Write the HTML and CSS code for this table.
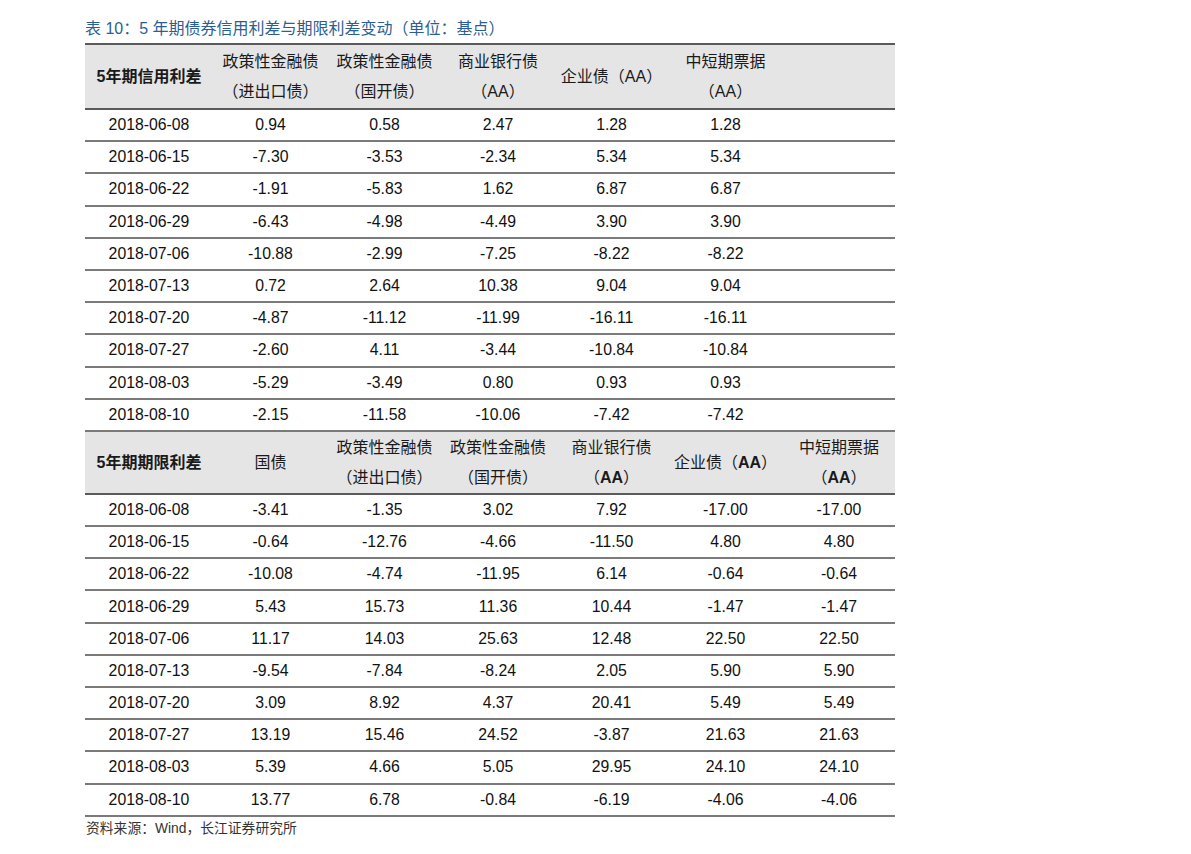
FILE: index.html
```html
<!DOCTYPE html>
<html lang="zh-CN">
<head>
<meta charset="utf-8">
<title>5年期债券信用利差与期限利差变动</title>
<link rel="stylesheet" href="styles.css">
</head>
<body>
<div class="page">
  <div class="title">表 10：5 年期债券信用利差与期限利差变动（单位：基点）</div>
  <table class="spread">
    <colgroup>
      <col class="c-date">
      <col class="c2"><col class="c3"><col class="c4"><col class="c5"><col class="c6"><col class="c7">
    </colgroup>
    <tbody>
      <tr class="head">
        <td class="lead">5年期信用利差</td>
        <td>政策性金融债<br>（进出口债）</td>
        <td>政策性金融债<br>（国开债）</td>
        <td>商业银行债<br>（AA）</td>
        <td>企业债（AA）</td>
        <td>中短期票据<br>（AA）</td>
        <td></td>
      </tr>
      <tr><td>2018-06-08</td><td>0.94</td><td>0.58</td><td>2.47</td><td>1.28</td><td>1.28</td><td></td></tr>
      <tr><td>2018-06-15</td><td>-7.30</td><td>-3.53</td><td>-2.34</td><td>5.34</td><td>5.34</td><td></td></tr>
      <tr><td>2018-06-22</td><td>-1.91</td><td>-5.83</td><td>1.62</td><td>6.87</td><td>6.87</td><td></td></tr>
      <tr><td>2018-06-29</td><td>-6.43</td><td>-4.98</td><td>-4.49</td><td>3.90</td><td>3.90</td><td></td></tr>
      <tr><td>2018-07-06</td><td>-10.88</td><td>-2.99</td><td>-7.25</td><td>-8.22</td><td>-8.22</td><td></td></tr>
      <tr><td>2018-07-13</td><td>0.72</td><td>2.64</td><td>10.38</td><td>9.04</td><td>9.04</td><td></td></tr>
      <tr><td>2018-07-20</td><td>-4.87</td><td>-11.12</td><td>-11.99</td><td>-16.11</td><td>-16.11</td><td></td></tr>
      <tr><td>2018-07-27</td><td>-2.60</td><td>4.11</td><td>-3.44</td><td>-10.84</td><td>-10.84</td><td></td></tr>
      <tr><td>2018-08-03</td><td>-5.29</td><td>-3.49</td><td>0.80</td><td>0.93</td><td>0.93</td><td></td></tr>
      <tr><td>2018-08-10</td><td>-2.15</td><td>-11.58</td><td>-10.06</td><td>-7.42</td><td>-7.42</td><td></td></tr>
      <tr class="head head-second">
        <td class="lead">5年期期限利差</td>
        <td>国债</td>
        <td>政策性金融债<br>（进出口债）</td>
        <td>政策性金融债<br>（国开债）</td>
        <td>商业银行债<br>（<b>AA</b>）</td>
        <td>企业债（<b>AA</b>）</td>
        <td>中短期票据<br>（<b>AA</b>）</td>
      </tr>
      <tr><td>2018-06-08</td><td>-3.41</td><td>-1.35</td><td>3.02</td><td>7.92</td><td>-17.00</td><td>-17.00</td></tr>
      <tr><td>2018-06-15</td><td>-0.64</td><td>-12.76</td><td>-4.66</td><td>-11.50</td><td>4.80</td><td>4.80</td></tr>
      <tr><td>2018-06-22</td><td>-10.08</td><td>-4.74</td><td>-11.95</td><td>6.14</td><td>-0.64</td><td>-0.64</td></tr>
      <tr><td>2018-06-29</td><td>5.43</td><td>15.73</td><td>11.36</td><td>10.44</td><td>-1.47</td><td>-1.47</td></tr>
      <tr><td>2018-07-06</td><td>11.17</td><td>14.03</td><td>25.63</td><td>12.48</td><td>22.50</td><td>22.50</td></tr>
      <tr><td>2018-07-13</td><td>-9.54</td><td>-7.84</td><td>-8.24</td><td>2.05</td><td>5.90</td><td>5.90</td></tr>
      <tr><td>2018-07-20</td><td>3.09</td><td>8.92</td><td>4.37</td><td>20.41</td><td>5.49</td><td>5.49</td></tr>
      <tr><td>2018-07-27</td><td>13.19</td><td>15.46</td><td>24.52</td><td>-3.87</td><td>21.63</td><td>21.63</td></tr>
      <tr><td>2018-08-03</td><td>5.39</td><td>4.66</td><td>5.05</td><td>29.95</td><td>24.10</td><td>24.10</td></tr>
      <tr><td>2018-08-10</td><td>13.77</td><td>6.78</td><td>-0.84</td><td>-6.19</td><td>-4.06</td><td>-4.06</td></tr>
    </tbody>
  </table>
  <div class="source">资料来源：Wind，长江证券研究所</div>
</div>
</body>
</html>
```

FILE: styles.css
```css
html, body {
  margin: 0;
  padding: 0;
  background: #ffffff;
}

body {
  font-family: "Liberation Sans", Arial, "Noto Sans CJK SC", sans-serif;
  color: #111111;
}

.page {
  padding: 19px 0 0 85px;
  width: 810px;
}

.title {
  font-family: "Liberation Sans", "Noto Sans CJK SC", sans-serif;
  font-size: 16px;
  line-height: 20px;
  color: #2b5f93;
  margin-bottom: 4px;
  white-space: nowrap;
}

.spread {
  width: 810px;
  table-layout: fixed;
  border-collapse: separate;
  border-spacing: 0;
  border-top: 2px solid #5a5a5a;
}

.c-date { width: 128px; }
.c2 { width: 115px; }
.c3 { width: 113px; }
.c4 { width: 114px; }
.c5 { width: 113px; }
.c6 { width: 115px; }
.c7 { width: 112px; }

.spread td {
  padding: 0;
  text-align: center;
  vertical-align: middle;
  border-bottom: 2px solid #7a7a7a;
  height: 30.2px;
  font-size: 15.8px;
  line-height: 20px;
  white-space: nowrap;
}

.spread tr.head td {
  background: #e5e5e5;
  height: 62px;
  font-family: "Liberation Sans", "Noto Sans CJK SC", sans-serif;
  font-size: 16px;
  line-height: 30px;
  color: #1a1a1a;
  border-bottom: 2px solid #5a5a5a;
  padding-top: 1px;
}

.spread tr.head-second td {
  height: 60px;
}

.spread tr.head td.lead {
  font-weight: bold;
}

.spread tr.head td b {
  font-weight: bold;
}

.source {
  font-family: "Liberation Sans", "Noto Sans CJK SC", sans-serif;
  font-size: 13.8px;
  line-height: 18px;
  color: #333333;
  padding-top: 3px;
  padding-left: 1px;
}
```
